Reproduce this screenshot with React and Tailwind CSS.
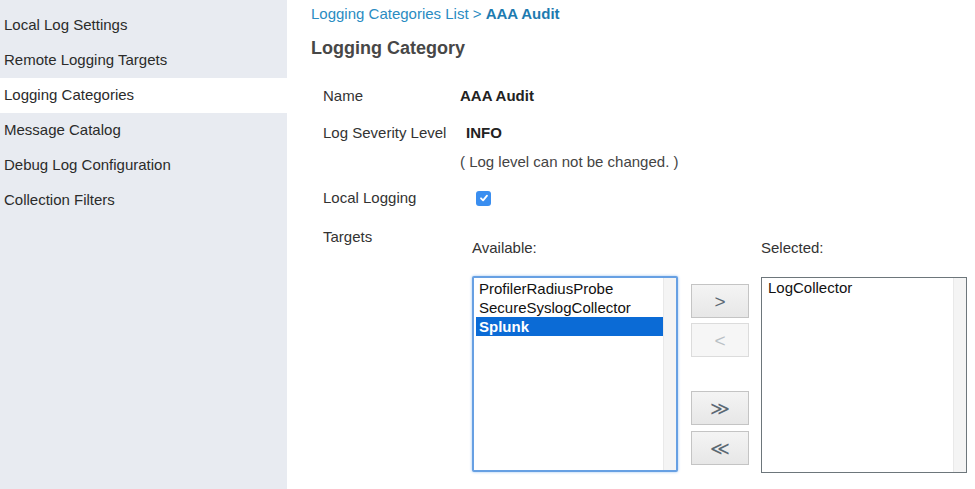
import React, { useState } from "react";

const menu = [
  "Local Log Settings",
  "Remote Logging Targets",
  "Logging Categories",
  "Message Catalog",
  "Debug Log Configuration",
  "Collection Filters",
];

function MoveButton({ label, disabled }) {
  return (
    <button
      className={
        "w-[58px] h-[34px] flex items-center justify-center border text-[19px] leading-none " +
        (disabled
          ? "border-[#dcdcdc] bg-[#f6f6f6] text-[#b9c0c5]"
          : "border-[#c4c4c4] bg-gradient-to-b from-[#f4f4f4] to-[#e7e7e7] text-[#5b6873]")
      }
    >
      {label}
    </button>
  );
}

function ListBox({ items, selected, focused }) {
  return (
    <div
      className={
        "w-[206px] h-[196px] flex bg-white " +
        (focused
          ? "border-2 border-[#67a0e3] rounded-[2px] shadow-[0_0_3px_#9cc3f0]"
          : "border border-[#6d767b]")
      }
    >
      <div className={"flex-1 " + (focused ? "pt-[1px] pl-[2px]" : "pt-[0px] pl-[3px]")}>
        {items.map((it) => (
          <div
            key={it}
            className={
              "h-[19px] leading-[19px] px-[3px] text-[15px] " +
              (it === selected ? "bg-[#0b6bd6] text-white font-bold" : "text-[#111]")
            }
          >
            {it}
          </div>
        ))}
      </div>
      <div className="w-[13px] bg-[#f4f4f4] border-l border-[#e9e9e9]" />
    </div>
  );
}

export default function App() {
  const [local, setLocal] = useState(true);

  return (
    <div className="min-h-screen flex bg-white font-['Liberation_Sans',Arial,sans-serif] text-[#333]">
      <div className="w-[287px] shrink-0 bg-[#e8ebf1] pt-[8px]">
        {menu.map((m) => (
          <div
            key={m}
            className={
              "h-[35px] flex items-center pl-[4px] text-[15px] text-[#2b2b2b] " +
              (m === "Logging Categories" ? "bg-white" : "")
            }
          >
            {m}
          </div>
        ))}
      </div>

      <div className="flex-1 pl-[24px] pt-[4px]">
        <div className="text-[15px] leading-[20px] text-[#2a8cc2]">
          Logging Categories List &gt; <span className="font-bold text-[#1d7bb0]">AAA Audit</span>
        </div>
        <h1 className="mt-[12px] text-[18px] leading-[24px] font-bold text-[#474747]">Logging Category</h1>

        <div className="pl-[12px] text-[15px] leading-[20px]">
          <div className="mt-[26px] flex">
            <div className="w-[137px]">Name</div>
            <div className="font-bold text-[#222]">AAA Audit</div>
          </div>
          <div className="mt-[17px] flex">
            <div className="w-[143px]">Log Severity Level</div>
            <div className="font-bold text-[#222]">INFO</div>
          </div>
          <div className="mt-[9px] pl-[137px] text-[#444]">( Log level can not be changed. )</div>
          <div className="mt-[16px] flex items-center">
            <div className="w-[153px]">Local Logging</div>
            <button
              onClick={() => setLocal(!local)}
              className={
                "w-[15px] h-[15px] rounded-[3px] flex items-center justify-center " +
                (local ? "bg-[#3a8ef0]" : "bg-white border border-gray-400")
              }
            >
              {local && (
                <svg width="10" height="10" viewBox="0 0 10 10">
                  <path d="M2 5.3 L4.1 7.4 L8 2.6" fill="none" stroke="white" strokeWidth="1.8" strokeLinecap="round" strokeLinejoin="round" />
                </svg>
              )}
            </button>
          </div>
          <div className="mt-[19px] flex">
            <div className="w-[149px]">Targets</div>
            <div className="flex pt-[11px]">
              <div>
                <div>Available:</div>
                <div className="mt-[18px]">
                  <ListBox
                    items={["ProfilerRadiusProbe", "SecureSyslogCollector", "Splunk"]}
                    selected="Splunk"
                    focused
                  />
                </div>
              </div>
              <div className="ml-[13px] pt-[46px] flex flex-col">
                <MoveButton label="&gt;" />
                <div className="mt-[5px]">
                  <MoveButton label="&lt;" disabled />
                </div>
                <div className="mt-[34px]">
                  <MoveButton label="≫" />
                </div>
                <div className="mt-[6px]">
                  <MoveButton label="≪" />
                </div>
              </div>
              <div className="ml-[12px]">
                <div>Selected:</div>
                <div className="mt-[19px]">
                  <ListBox items={["LogCollector"]} />
                </div>
              </div>
            </div>
          </div>
        </div>
      </div>
    </div>
  );
}
